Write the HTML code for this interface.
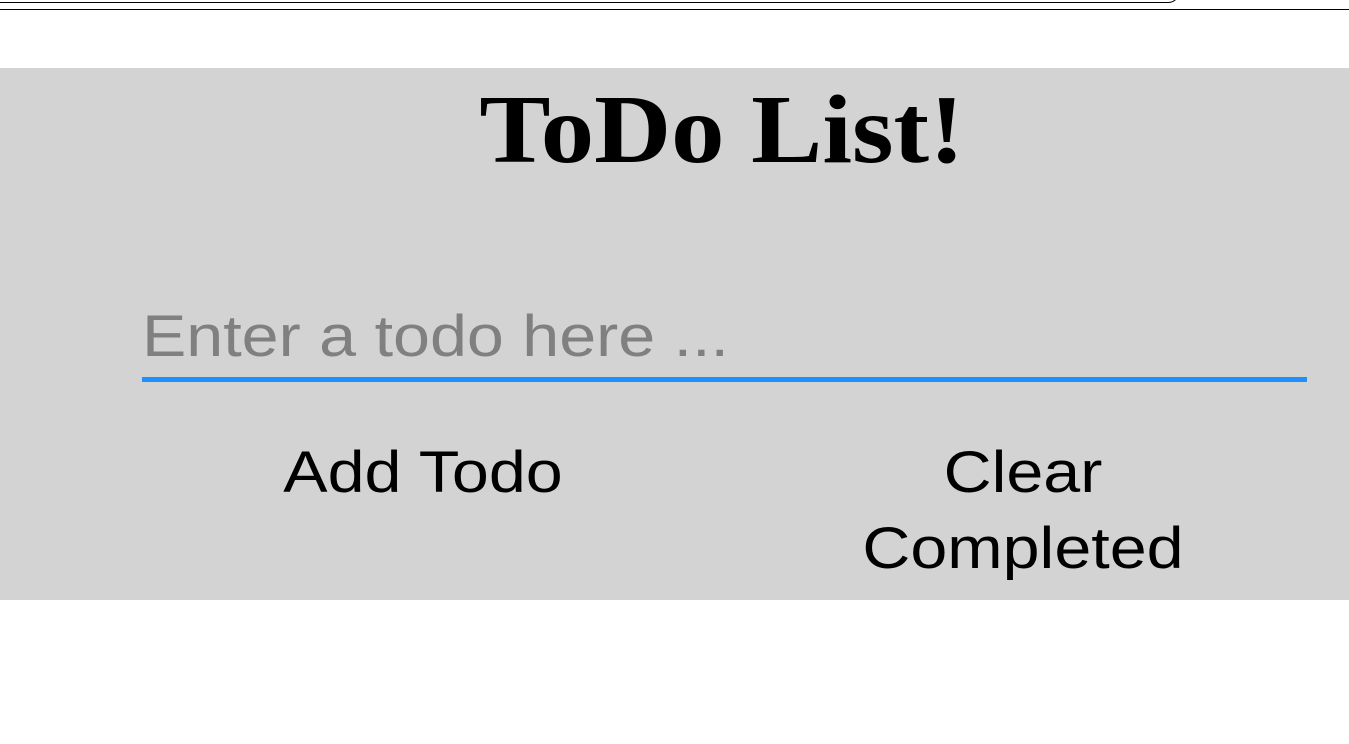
<!DOCTYPE html>
<html><head><style>
body{margin:0;width:1349px;height:744px;background:#fff;position:relative;overflow:hidden;font-family:"Liberation Sans",sans-serif}
.l1{position:absolute;left:-10px;top:-10px;width:1188px;height:11px;border:1px solid #000;border-radius:0 0 12px 0}
.l2{position:absolute;left:0;top:9px;width:1349px;height:1px;background:#000}
.box{position:absolute;left:0;top:68px;width:1349px;height:532px;background:#d3d3d3}
h1{position:absolute;left:222px;width:1000px;text-align:center;top:80px;margin:0;font:bold 97px "Liberation Serif",serif;line-height:100px;transform:scaleX(1.1)}
.inp{position:absolute;left:142px;top:304px;font-size:58px;color:#808080;line-height:66px;transform:scaleX(1.145);transform-origin:0 0}
.line{position:absolute;left:142px;top:377px;width:1165px;height:5px;background:#1e90ff}
.b{position:absolute;font-size:58px;line-height:76px;text-align:center;color:#000;transform:scaleX(1.145)}
</style></head><body>
<div class="l1"></div><div class="l2"></div>
<div class="box"></div>
<h1>ToDo List!</h1>
<div class="inp">Enter a todo here ...</div>
<div class="line"></div>
<div class="b" style="left:223px;width:400px;top:435px">Add Todo</div>
<div class="b" style="left:823px;width:400px;top:435px">Clear<br>Completed</div>
</body></html>
